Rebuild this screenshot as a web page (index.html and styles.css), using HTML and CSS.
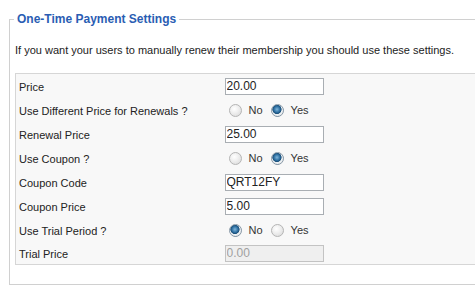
FILE: index.html
```
<!DOCTYPE html>
<html>
<head>
<meta charset="utf-8">
<title>One-Time Payment Settings</title>
<link rel="stylesheet" href="styles.css">
</head>
<body>
<fieldset class="panel">
  <legend>One-Time Payment Settings</legend>
  <p class="intro">If you want your users to manually renew their membership you should use these settings.</p>
  <table class="settings">
    <tr>
      <td class="label">Price</td>
      <td><input type="text" class="field" value="20.00"></td>
    </tr>
    <tr>
      <td class="label">Use Different Price for Renewals ?</td>
      <td class="choice">
        <input type="radio" name="renew"> <span>No</span>
        <input type="radio" name="renew" checked> <span>Yes</span>
      </td>
    </tr>
    <tr>
      <td class="label">Renewal Price</td>
      <td><input type="text" class="field" value="25.00"></td>
    </tr>
    <tr>
      <td class="label">Use Coupon ?</td>
      <td class="choice">
        <input type="radio" name="coupon"> <span>No</span>
        <input type="radio" name="coupon" checked> <span>Yes</span>
      </td>
    </tr>
    <tr>
      <td class="label">Coupon Code</td>
      <td><input type="text" class="field" value="QRT12FY"></td>
    </tr>
    <tr>
      <td class="label">Coupon Price</td>
      <td><input type="text" class="field" value="5.00"></td>
    </tr>
    <tr>
      <td class="label">Use Trial Period ?</td>
      <td class="choice">
        <input type="radio" name="trial" checked> <span>No</span>
        <input type="radio" name="trial"> <span>Yes</span>
      </td>
    </tr>
    <tr>
      <td class="label">Trial Price</td>
      <td><input type="text" class="field" value="0.00" disabled></td>
    </tr>
  </table>
</fieldset>
</body>
</html>
```

FILE: styles.css
```
* {
  box-sizing: border-box;
}

body {
  margin: 0;
  padding: 12px 0 0 9px;
  background: #fff;
  font-family: "Liberation Sans", Arial, sans-serif;
  font-size: 11px;
  color: #222;
  overflow: hidden;
}

.panel {
  width: 490px;
  margin: 0;
  padding: 0 0 19px 5px;
  border: 1px solid #d0d0d0;
}

.panel legend {
  margin-left: -1px;
  padding: 0 3px;
  font-size: 12px;
  font-weight: bold;
  line-height: 15px;
  color: #2a5db3;
}

.intro {
  margin: 16px 0 0 0;
  line-height: 14px;
}

.settings {
  margin-top: 16px;
  width: 470px;
  border-collapse: collapse;
  border: 1px solid #d6d6d6;
  background: #f8f8f8;
}

.settings td {
  height: 24px;
  padding: 1px 0 0 0;
  vertical-align: middle;
}

.settings tr:last-child td {
  height: 23px;
}

.settings td.label {
  width: 209px;
  padding: 2px 0 0 3px;
}

.field {
  display: block;
  width: 99px;
  height: 17px;
  margin: 0;
  padding: 0 1px;
  border: 1px solid #a9aeb3;
  background: #fff;
  font-family: "Liberation Sans", Arial, sans-serif;
  font-size: 12px;
  color: #222;
}

.field:disabled {
  background: #efefef;
  border-color: #c3c3c3;
  color: #a0a0a0;
}

.choice {
  display: flex;
  align-items: center;
}

.choice span {
  font-size: 11px;
  color: #333;
}

.choice input {
  appearance: none;
  -webkit-appearance: none;
  width: 13px;
  height: 13px;
  margin: 0 7px 0 4px;
  border: 1px solid #b5b5b5;
  border-radius: 50%;
  background: radial-gradient(circle at 40% 35%, #ffffff 0, #f0f0f0 40%, #d6d6d6 100%);
}

.choice input + span {
  margin-right: 4px;
}

.choice input:checked {
  border-color: #8a9aa8;
  background: radial-gradient(circle at 45% 40%, #7fb6dc 0, #2b6c9e 35%, #1c4f78 48%, #eef2f5 55%, #dcdcdc 100%);
}
```
